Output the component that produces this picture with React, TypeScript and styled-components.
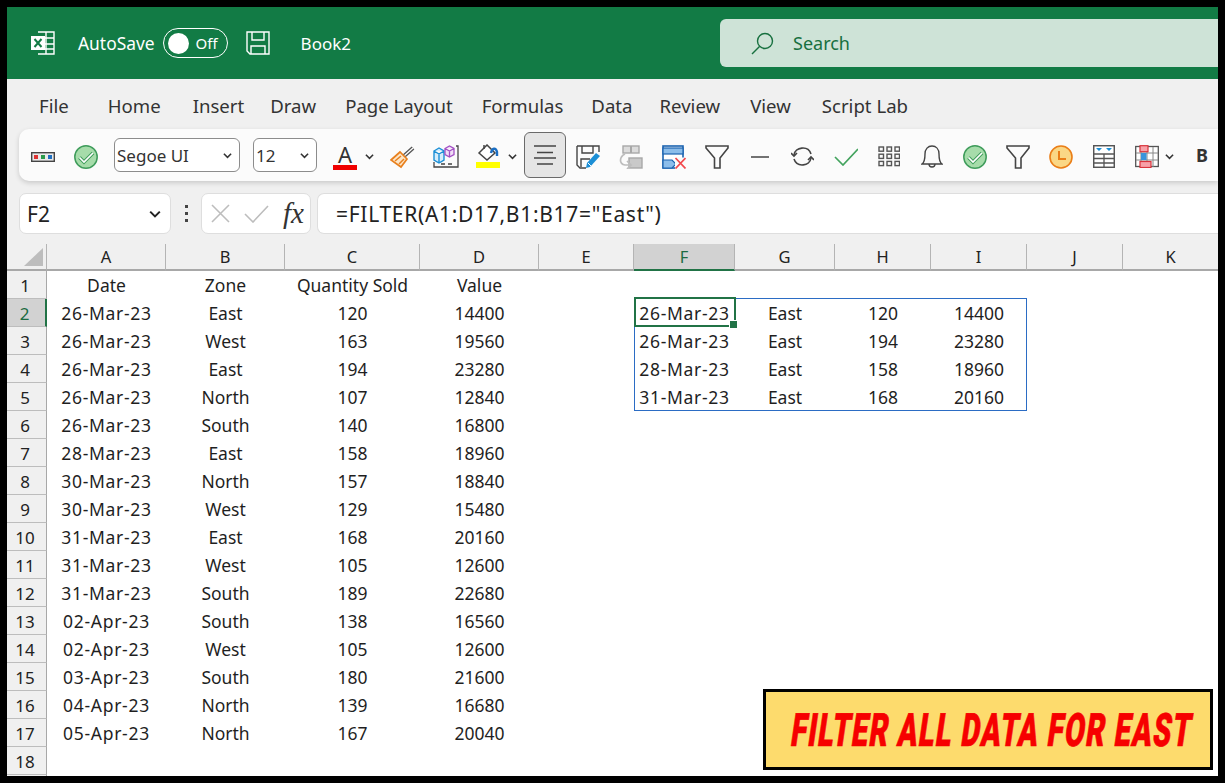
import React from 'react';
import styled, { createGlobalStyle } from 'styled-components';

const GlobalStyle = createGlobalStyle`
  html, body { margin: 0; padding: 0; background: #000; }
  * { box-sizing: border-box; }
`;

const uiFont = `"Noto Sans", "Open Sans", "Liberation Sans", sans-serif`;

const Frame = styled.div`
  position: relative;
  width: 1225px;
  height: 783px;
  border: 7px solid #000;
  background: #f0f0f0;
  overflow: hidden;
  font-family: ${uiFont};
  color: #222;
`;

const TitleBar = styled.div`
  height: 72px;
  background: #127b45;
  display: flex;
  align-items: center;
  color: #fff;
  padding-left: 24px;
`;

const AutoSaveLabel = styled.span`
  margin-left: 23px;
  font-size: 17.4px;
`;

const Toggle = styled.div`
  margin-left: 8px;
  width: 65px;
  height: 30px;
  border: 1px solid #fff;
  border-radius: 15px;
  display: flex;
  align-items: center;
  padding-left: 4px;
  font-size: 15px;
`;

const Knob = styled.span`
  width: 21px;
  height: 21px;
  border-radius: 50%;
  background: #fff;
  margin-right: 7px;
`;

const SaveSlot = styled.span`
  margin-left: 18px;
  display: flex;
`;

const BookName = styled.span`
  margin-left: 31px;
  font-size: 17px;
`;

const SearchBox = styled.div`
  margin-left: auto;
  width: 498px;
  height: 48px;
  background: #cee3d7;
  border-radius: 6px 0 0 6px;
  display: flex;
  align-items: center;
  padding-left: 31px;
  gap: 19px;
  color: #17703f;
  font-size: 18px;
`;

const MenuBar = styled.div`
  height: 50px;
  display: flex;
  align-items: center;
  padding: 2px 0 0 32px;
  font-size: 18.6px;
  color: #333;
`;

const MenuItem = styled.span<{ $left: number }>`
  margin-left: ${p => p.$left}px;
`;

const Toolbar = styled.div`
  margin-left: 12px;
  height: 52px;
  background: #fbfbfb;
  border-radius: 10px 0 0 10px;
  box-shadow: 0 2px 5px rgba(0, 0, 0, 0.16);
  display: flex;
  align-items: center;
  padding-left: 2px;
`;

const IconSlot = styled.span<{ $w?: number; $left?: number }>`
  width: ${p => p.$w ?? 43}px;
  margin-left: ${p => p.$left ?? 0}px;
  flex: none;
  display: flex;
  justify-content: center;
  align-items: center;
  padding-top: 3px;
`;

const SelectBox = styled.div<{ $w: number; $left: number }>`
  width: ${p => p.$w}px;
  margin-left: ${p => p.$left}px;
  height: 34px;
  flex: none;
  background: #fff;
  border: 1px solid #8c8c8c;
  border-radius: 6px;
  display: flex;
  align-items: center;
  justify-content: space-between;
  padding: 0 7px 0 2px;
  font-size: 17px;
  color: #333;
`;

const ColorLetter = styled.span`
  width: 24px;
  height: 26px;
  display: flex;
  flex-direction: column;
  align-items: center;
  justify-content: flex-end;
  font-size: 22px;
  line-height: 20px;
  color: #333;
  &::after {
    content: '';
    width: 24px;
    height: 6px;
    background: #f00000;
    margin-top: 1px;
  }
`;

const AlignButton = styled.span`
  width: 42px;
  height: 46px;
  flex: none;
  margin-left: 6px;
  background: #e5e5e5;
  border: 1px solid #6a6a6a;
  border-radius: 6px;
  display: flex;
  align-items: center;
  justify-content: center;
`;

const BoldMark = styled.span`
  margin-left: 21px;
  font-size: 18px;
  font-weight: 700;
  color: #333;
`;

const FormulaRow = styled.div`
  margin: 12px 0 0 12px;
  height: 41px;
  display: flex;
  align-items: stretch;
`;

const WhiteBox = styled.div`
  background: #fff;
  border: 1px solid #dedede;
  border-radius: 7px;
  display: flex;
  align-items: center;
`;

const NameBox = styled(WhiteBox)`
  width: 152px;
  justify-content: space-between;
  padding: 0 9px 0 7px;
  font-size: 21px;
`;

const Dots = styled.span`
  width: 30px;
  display: flex;
  flex-direction: column;
  align-items: center;
  justify-content: center;
  gap: 4px;
  & i {
    width: 3px;
    height: 3px;
    background: #444;
  }
`;

const FxBox = styled(WhiteBox)`
  width: 110px;
  padding-left: 9px;
  gap: 14px;
`;

const FxMark = styled.span`
  font-family: "Liberation Serif", serif;
  font-style: italic;
  font-size: 29px;
  line-height: 1;
  color: #333;
`;

const FormulaBox = styled(WhiteBox)`
  flex: 1;
  margin-left: 6px;
  padding-left: 18px;
  border-radius: 7px 0 0 7px;
  border-right: none;
  font-size: 21px;
  letter-spacing: 0.7px;
  color: #222;
`;

const Sheet = styled.div`
  position: relative;
  margin-top: 10px;
  background: #fff;
`;

const colTemplate = '40px 119px 119px 135px 119px 95px 101px 100px 96px 96px 96px 96px';

const HeaderRow = styled.div`
  display: grid;
  grid-template-columns: ${colTemplate};
  height: 27px;
  background: #f0f0f0;
`;

const Corner = styled.div`
  border-bottom: 2px solid #a8a8a8;
  border-right: 1px solid #b4b4b4;
  position: relative;
  &::after {
    content: '';
    position: absolute;
    left: 17px;
    top: 4px;
    width: 19px;
    height: 18px;
    background: #bdbdbd;
    clip-path: polygon(100% 0, 100% 100%, 0 100%);
  }
`;

const ColHead = styled.div<{ $active?: boolean }>`
  display: flex;
  align-items: center;
  justify-content: center;
  font-size: 16.5px;
  background: ${p => (p.$active ? '#d2d2d2' : '#f0f0f0')};
  color: ${p => (p.$active ? '#1c6b42' : '#222')};
  border-right: 1px solid #b4b4b4;
  border-bottom: 2px solid ${p => (p.$active ? '#217346' : '#a8a8a8')};
`;

const Row = styled.div`
  display: grid;
  grid-template-columns: ${colTemplate};
  height: 28px;
`;

const RowHead = styled.div<{ $active?: boolean }>`
  display: flex;
  align-items: center;
  justify-content: center;
  padding: 1px 3px 0 0;
  font-size: 17px;
  background: ${p => (p.$active ? '#d2d2d2' : '#f0f0f0')};
  color: ${p => (p.$active ? '#1c6b42' : '#222')};
  border-bottom: 1px solid #bdbdbd;
  border-right: ${p => (p.$active ? '2px solid #217346' : '1px solid #a8a8a8')};
`;

const Cell = styled.div<{ $date?: boolean }>`
  display: flex;
  align-items: center;
  justify-content: center;
  font-size: 17.5px;
  letter-spacing: ${p => (p.$date ? '0.7px' : '0')};
  color: #1f1f1f;
  white-space: nowrap;
`;

const RangeOutline = styled.div`
  position: absolute;
  left: 627px;
  top: 54px;
  width: 393px;
  height: 113px;
  border: 1px solid #2b6cc4;
  pointer-events: none;
`;

const ActiveCell = styled.div`
  position: absolute;
  left: 627px;
  top: 53px;
  width: 102px;
  height: 30px;
  border: 2px solid #217346;
  pointer-events: none;
  &::after {
    content: '';
    position: absolute;
    right: -4px;
    bottom: -4px;
    width: 7px;
    height: 7px;
    background: #217346;
    border: 1px solid #fff;
  }
`;

const Banner = styled.div`
  position: absolute;
  right: 5px;
  bottom: 6px;
  width: 450px;
  height: 81px;
  background: #fddb6d;
  border: 3px solid #000;
  display: flex;
  align-items: center;
  justify-content: center;
  padding-left: 9px;
`;

const BannerText = styled.span`
  display: inline-block;
  font-family: Roboto, "Liberation Sans", sans-serif;
  font-weight: 900;
  font-size: 46px;
  line-height: 1;
  letter-spacing: 2px;
  color: #f60000;
  -webkit-text-stroke: 0.7px #f60000;
  white-space: nowrap;
  transform: scaleX(0.63) skewX(-13deg);
`;

const Chevron = ({ color = '#333', size = 9 }: { color?: string; size?: number }) => (
  <svg width={size} height={size} viewBox="0 0 10 10" fill="none">
    <path d="M1 3 L5 7 L9 3" stroke={color} strokeWidth="1.7" />
  </svg>
);

const CheckCircle = () => (
  <svg width="24" height="24" viewBox="0 0 24 24">
    <circle cx="12" cy="12" r="11.2" fill="#a6dcaa" stroke="#3f9c5b" strokeWidth="1.5" />
    <path d="M5.5 12.5 L10 17 L19 8" fill="none" stroke="#3f9c5b" strokeWidth="3.6" />
    <path d="M5.5 12.5 L10 17 L19 8" fill="none" stroke="#fff" strokeWidth="1.6" />
  </svg>
);

const Funnel = () => (
  <svg width="24" height="24" viewBox="0 0 24 24" fill="none">
    <path d="M1 1 H23 V3 L15 13 V23 H9.5 V13 L1 3 Z" stroke="#444" strokeWidth="1.6" />
  </svg>
);

const ExcelLogo = () => (
  <svg width="24" height="24" viewBox="0 0 24 24" fill="none">
    <path d="M7 1 H23 V23 H7 M7 7 H23 M7 13 H23 M7 18 H23 M15 1 V23" stroke="#fff" strokeWidth="1.4" />
    <rect x="0" y="5" width="14" height="14" fill="#fff" />
    <path d="M3.5 8 L10.5 16 M10.5 8 L3.5 16" stroke="#127b45" strokeWidth="2" />
  </svg>
);

const FloppyIcon = () => (
  <svg width="24" height="24" viewBox="0 0 24 24" fill="none" stroke="#fff" strokeWidth="1.4">
    <path d="M1 1 H23 V23 H4 L1 20 Z" />
    <path d="M6 1 V9 H18 V1 M5 23 V15 H19 V23" />
  </svg>
);

const SearchIcon = () => (
  <svg width="23" height="23" viewBox="0 0 23 23" fill="none" stroke="#17703f" strokeWidth="1.4">
    <circle cx="14" cy="9" r="7.5" />
    <path d="M8.5 14.5 L1 22" />
  </svg>
);

const RgbIcon = () => (
  <svg width="24" height="10" viewBox="0 0 24 10">
    <rect x="0.7" y="0.7" width="22.6" height="8.6" fill="#e9e9e9" stroke="#444" strokeWidth="1.4" />
    <rect x="3" y="3" width="4" height="4" fill="#d33" />
    <rect x="10" y="3" width="4" height="4" fill="#2a9a4a" />
    <rect x="17" y="3" width="4" height="4" fill="#1f6fc0" />
  </svg>
);

const BrushIcon = () => (
  <svg width="26" height="24" viewBox="0 0 26 24" fill="none">
    <path d="M14 11 L23 3" stroke="#555" strokeWidth="4" />
    <path d="M14 11 L23 3" stroke="#fff" strokeWidth="1.4" />
    <path d="M1 15 L10 7 L17 14 L11 22 Z" fill="#fde6c8" stroke="#e8801e" strokeWidth="1.7" />
    <path d="M5 16 L11 11 M9 19 L14 14" stroke="#e8801e" strokeWidth="1.5" />
  </svg>
);

const CubesIcon = () => (
  <svg width="26" height="24" viewBox="0 0 26 24" fill="none">
    <path d="M23 1 H25 V22 H1 V17 M8 19 H12 M15 19 H19" stroke="#444" strokeWidth="1.3" />
    <path d="M1 6 L6 3 L11 6 V15 L6 18 L1 15 Z M1 6 L6 9 L11 6 M6 9 V18" fill="#d5ecfb" stroke="#1c8fd6" strokeWidth="1.4" />
    <path d="M12 3.5 L16.5 1 L21 3.5 V9.5 L16.5 12 L12 9.5 Z M12 3.5 L16.5 6 L21 3.5 M16.5 6 V12" fill="#f1def6" stroke="#a24fc4" strokeWidth="1.3" />
  </svg>
);

const FillIcon = () => (
  <svg width="24" height="25" viewBox="0 0 24 25" fill="none">
    <path d="M3 9 L11 1 L19 9 L11 16 Z" fill="#fff" stroke="#444" strokeWidth="1.5" />
    <path d="M8 5 L8 1" stroke="#444" strokeWidth="1.5" />
    <path d="M15 9 C16 4 20 3 21 8 L21 12" stroke="#1b6ec2" strokeWidth="2.4" />
    <rect x="0" y="18" width="24" height="6" fill="#ffff00" />
  </svg>
);

const AlignLines = () => (
  <svg width="22" height="20" viewBox="0 0 22 20" stroke="#444" strokeWidth="1.6">
    <path d="M0 1 H22 M3 7.5 H19 M0 13 H22 M3 19 H19" />
  </svg>
);

const SaveEditIcon = () => (
  <svg width="24" height="24" viewBox="0 0 24 24" fill="none">
    <path d="M1 1 H23 V7 M1 1 V20 L4 23 H10" stroke="#444" strokeWidth="1.4" />
    <path d="M6 1 V8 H17 V1 M5 22 V14 H14" stroke="#444" strokeWidth="1.4" />
    <path d="M10 23 L11 18 L20 8 L24 11 L14 22 Z" fill="#1c8fd6" />
    <path d="M12 18 L15 21" stroke="#fff" strokeWidth="1" />
  </svg>
);

const ArrangeIcon = () => (
  <svg width="24" height="24" viewBox="0 0 24 24" fill="none">
    <rect x="4" y="1" width="16" height="7" fill="#dcdcdc" stroke="#a8a8a8" strokeWidth="1.4" />
    <path d="M12 1 V8" stroke="#a8a8a8" strokeWidth="2" />
    <rect x="10" y="13" width="13" height="10" fill="#c9c9c9" stroke="#a8a8a8" strokeWidth="1.4" />
    <path d="M6 9 C0 12 0 19 6 20 L12 20 M8 16 L12 20 L8 24" stroke="#bdbdbd" strokeWidth="1.7" />
  </svg>
);

const RemoveIcon = () => (
  <svg width="24" height="24" viewBox="0 0 24 24" fill="none">
    <rect x="1" y="1" width="20" height="22" stroke="#1b63b0" strokeWidth="1.6" fill="#fff" />
    <rect x="1" y="3" width="20" height="6" fill="#8cbdea" stroke="#1b63b0" strokeWidth="1.2" />
    <path d="M1 15 H10 L14 19 L10 23 H1 Z" fill="#8cbdea" stroke="#1b63b0" strokeWidth="1.2" />
    <rect x="13" y="12.5" width="11" height="11.5" fill="#fbfbfb" />
    <path d="M13.5 13 L23.5 23.5 M23.5 13 L13.5 23.5" stroke="#f2484c" strokeWidth="1.7" />
  </svg>
);

const MinusIcon = () => (
  <svg width="18" height="4" viewBox="0 0 18 4"><path d="M0 2 H18" stroke="#444" strokeWidth="1.5" /></svg>
);

const RefreshIcon = () => (
  <svg width="23" height="21" viewBox="0 0 23 21" fill="none" stroke="#444" strokeWidth="1.6">
    <path d="M3 9 C4 1 17 -1 20 8" />
    <path d="M20 12 C19 20 6 22 3 13" />
    <path d="M0 7 L3 10 L6 7 M17 14 L20 11 L23 14" />
  </svg>
);

const GreenCheck = () => (
  <svg width="24" height="18" viewBox="0 0 24 18" fill="none">
    <path d="M1 9 L9 17 L24 1" stroke="#43a35e" strokeWidth="1.7" />
  </svg>
);

const GridIcon = () => (
  <svg width="22" height="21" viewBox="0 0 22 21" fill="none" stroke="#555" strokeWidth="1.4">
    {[0, 1, 2].map(r =>
      [0, 1, 2].map(c => <rect key={`${r}-${c}`} x={1 + c * 8} y={1 + r * 7.2} width="4.5" height="4.2" />)
    )}
  </svg>
);

const BellIcon = () => (
  <svg width="22" height="24" viewBox="0 0 22 24" fill="none" stroke="#444" strokeWidth="1.4">
    <path d="M1 19 C4 17 4 13 4 9 C4 4 7 1 11 1 C15 1 18 4 18 9 C18 13 18 17 21 19 Z" />
    <path d="M8 19 C8 23 14 23 14 19" />
  </svg>
);

const ClockIcon = () => (
  <svg width="24" height="24" viewBox="0 0 24 24" fill="none">
    <circle cx="12" cy="12" r="11" fill="#fad785" stroke="#ea7e17" strokeWidth="1.6" />
    <path d="M10 6 V14 H17" stroke="#ea7e17" strokeWidth="2" />
  </svg>
);

const TableIcon = () => (
  <svg width="22" height="23" viewBox="0 0 22 23" fill="none" stroke="#555" strokeWidth="1.3">
    <rect x="0.7" y="0.7" width="20.6" height="21.6" fill="#fff" strokeWidth="1.5" />
    <path d="M1 9 H21 M1 13.5 H21 M1 18 H21 M11 9 V22" />
    <path d="M3 3 H9 L6 6 Z M13 3 H19 L16 6 Z" fill="#1c8fd6" stroke="none" />
  </svg>
);

const RedTableIcon = () => (
  <svg width="24" height="23" viewBox="0 0 24 23" fill="none">
    <rect x="0.7" y="1.5" width="22.6" height="20" fill="#fff" stroke="#555" strokeWidth="1.3" />
    <path d="M1 8 H23 M1 15 H23 M6 2 V22 M12 2 V22 M18 2 V22" stroke="#888" strokeWidth="1" />
    <rect x="5" y="0.7" width="8" height="6" fill="#f7a1a8" stroke="#d9343c" strokeWidth="1.2" />
    <rect x="6" y="8" width="5.5" height="7" fill="#3a94dc" />
    <rect x="5" y="16.5" width="11" height="6" fill="#f7a1a8" stroke="#d9343c" strokeWidth="1.2" />
  </svg>
);

const CrossMark = () => (
  <svg width="19" height="19" viewBox="0 0 19 19"><path d="M1 1 L18 18 M18 1 L1 18" stroke="#bdbdbd" strokeWidth="1.6" /></svg>
);

const TickMark = () => (
  <svg width="25" height="18" viewBox="0 0 25 18" fill="none"><path d="M1 9 L9 17 L24 1" stroke="#bdbdbd" strokeWidth="1.6" /></svg>
);

const columns = ['A', 'B', 'C', 'D', 'E', 'F', 'G', 'H', 'I', 'J', 'K'];

const source: string[][] = [
  ['Date', 'Zone', 'Quantity Sold', 'Value'],
  ['26-Mar-23', 'East', '120', '14400'],
  ['26-Mar-23', 'West', '163', '19560'],
  ['26-Mar-23', 'East', '194', '23280'],
  ['26-Mar-23', 'North', '107', '12840'],
  ['26-Mar-23', 'South', '140', '16800'],
  ['28-Mar-23', 'East', '158', '18960'],
  ['30-Mar-23', 'North', '157', '18840'],
  ['30-Mar-23', 'West', '129', '15480'],
  ['31-Mar-23', 'East', '168', '20160'],
  ['31-Mar-23', 'West', '105', '12600'],
  ['31-Mar-23', 'South', '189', '22680'],
  ['02-Apr-23', 'South', '138', '16560'],
  ['02-Apr-23', 'West', '105', '12600'],
  ['03-Apr-23', 'South', '180', '21600'],
  ['04-Apr-23', 'North', '139', '16680'],
  ['05-Apr-23', 'North', '167', '20040'],
];

const spill: Record<number, string[]> = {
  1: ['26-Mar-23', 'East', '120', '14400'],
  2: ['26-Mar-23', 'East', '194', '23280'],
  3: ['28-Mar-23', 'East', '158', '18960'],
  4: ['31-Mar-23', 'East', '168', '20160'],
};

const menu: [string, number][] = [
  ['File', 0],
  ['Home', 39],
  ['Insert', 32],
  ['Draw', 26],
  ['Page Layout', 29],
  ['Formulas', 29],
  ['Data', 28],
  ['Review', 27],
  ['View', 30],
  ['Script Lab', 31],
];

export default function App() {
  return (
    <>
      <GlobalStyle />
      <Frame>
        <TitleBar>
          <ExcelLogo />
          <AutoSaveLabel>AutoSave</AutoSaveLabel>
          <Toggle>
            <Knob />
            Off
          </Toggle>
          <SaveSlot>
            <FloppyIcon />
          </SaveSlot>
          <BookName>Book2</BookName>
          <SearchBox>
            <SearchIcon />
            Search
          </SearchBox>
        </TitleBar>

        <MenuBar>
          {menu.map(([label, left]) => (
            <MenuItem key={label} $left={left}>{label}</MenuItem>
          ))}
        </MenuBar>

        <Toolbar>
          <IconSlot><RgbIcon /></IconSlot>
          <IconSlot><CheckCircle /></IconSlot>
          <SelectBox $w={126} $left={7}>
            Segoe UI
            <Chevron />
          </SelectBox>
          <SelectBox $w={64} $left={13}>
            12
            <Chevron />
          </SelectBox>
          <IconSlot $w={36} $left={10}><ColorLetter>A</ColorLetter></IconSlot>
          <IconSlot $w={12}><Chevron /></IconSlot>
          <IconSlot $left={6}><BrushIcon /></IconSlot>
          <IconSlot><CubesIcon /></IconSlot>
          <IconSlot $w={36} $left={3}><FillIcon /></IconSlot>
          <IconSlot $w={12}><Chevron /></IconSlot>
          <AlignButton><AlignLines /></AlignButton>
          <IconSlot><SaveEditIcon /></IconSlot>
          <IconSlot><ArrangeIcon /></IconSlot>
          <IconSlot><RemoveIcon /></IconSlot>
          <IconSlot><Funnel /></IconSlot>
          <IconSlot><MinusIcon /></IconSlot>
          <IconSlot><RefreshIcon /></IconSlot>
          <IconSlot><GreenCheck /></IconSlot>
          <IconSlot><GridIcon /></IconSlot>
          <IconSlot><BellIcon /></IconSlot>
          <IconSlot><CheckCircle /></IconSlot>
          <IconSlot><Funnel /></IconSlot>
          <IconSlot><ClockIcon /></IconSlot>
          <IconSlot><TableIcon /></IconSlot>
          <IconSlot><RedTableIcon /></IconSlot>
          <IconSlot $w={12} $left={-5}><Chevron /></IconSlot>
          <BoldMark>B</BoldMark>
        </Toolbar>

        <FormulaRow>
          <NameBox>
            F2
            <Chevron size={12} color="#222" />
          </NameBox>
          <Dots><i /><i /><i /></Dots>
          <FxBox>
            <CrossMark />
            <TickMark />
            <FxMark>fx</FxMark>
          </FxBox>
          <FormulaBox>=FILTER(A1:D17,B1:B17="East")</FormulaBox>
        </FormulaRow>

        <Sheet>
          <HeaderRow>
            <Corner />
            {columns.map(c => (
              <ColHead key={c} $active={c === 'F'}>{c}</ColHead>
            ))}
          </HeaderRow>
          {Array.from({ length: 19 }, (_, i) => {
            const left = source[i] ?? [];
            const right = spill[i] ?? [];
            return (
              <Row key={i}>
                <RowHead $active={i === 1}>{i < 18 ? i + 1 : null}</RowHead>
                {columns.map((c, j) => (
                  <Cell key={c} $date={(j === 0 || j === 5) && i > 0}>
                    {j < 4 ? left[j] : j >= 5 && j < 9 ? right[j - 5] : null}
                  </Cell>
                ))}
              </Row>
            );
          })}
          <RangeOutline />
          <ActiveCell />
        </Sheet>

        <Banner>
          <BannerText>FILTER ALL DATA FOR EAST</BannerText>
        </Banner>
      </Frame>
    </>
  );
}
